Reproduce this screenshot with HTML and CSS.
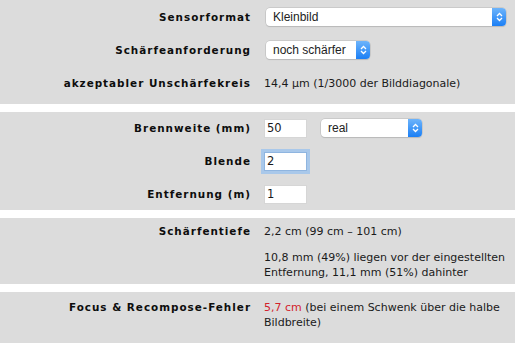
FILE: index.html
```html
<!DOCTYPE html>
<html lang="de">
  <head>
    <meta charset="UTF-8" />
    <meta name="viewport" content="width=device-width, initial-scale=1.0" />
    <title>Schärfentiefe-Rechner</title>
    <link rel="stylesheet" href="styles.css">
  </head>
  <body>
    <div class="calc">
      <div class="section first">
        <div class="row">
          <div class="label">Sensorformat</div>
          <div class="value">
            <div class="select wide">
              <span class="select-text">Kleinbild</span>
              <span class="arrows">
                <svg width="7" height="10" viewBox="0 0 7 10"><path d="M1 4 L3.5 1.5 L6 4 M1 6 L3.5 8.5 L6 6" fill="none" stroke="#fff" stroke-width="1.3"/></svg>
              </span>
            </div>
          </div>
        </div>
        <div class="row">
          <div class="label">Schärfeanforderung</div>
          <div class="value">
            <div class="select medium">
              <span class="select-text">noch schärfer</span>
              <span class="arrows">
                <svg width="7" height="10" viewBox="0 0 7 10"><path d="M1 4 L3.5 1.5 L6 4 M1 6 L3.5 8.5 L6 6" fill="none" stroke="#fff" stroke-width="1.3"/></svg>
              </span>
            </div>
          </div>
        </div>
        <div class="row">
          <div class="label">akzeptabler Unschärfekreis</div>
          <div class="value text">14,4 µm (1/3000 der Bilddiagonale)</div>
        </div>
      </div>

      <div class="section second">
        <div class="row">
          <div class="label">Brennweite (mm)</div>
          <div class="value inline">
            <div class="input">50</div>
            <div class="select small">
              <span class="select-text">real</span>
              <span class="arrows">
                <svg width="7" height="10" viewBox="0 0 7 10"><path d="M1 4 L3.5 1.5 L6 4 M1 6 L3.5 8.5 L6 6" fill="none" stroke="#fff" stroke-width="1.3"/></svg>
              </span>
            </div>
          </div>
        </div>
        <div class="row">
          <div class="label">Blende</div>
          <div class="value">
            <div class="input focused">2</div>
          </div>
        </div>
        <div class="row">
          <div class="label">Entfernung (m)</div>
          <div class="value">
            <div class="input">1</div>
          </div>
        </div>
      </div>

      <div class="section third">
        <div class="row top">
          <div class="label">Schärfentiefe</div>
          <div class="value text">2,2 cm (99 cm – 101 cm)</div>
        </div>
        <div class="row top">
          <div class="label"></div>
          <div class="value text">10,8 mm (49%) liegen vor der eingestellten Entfernung, 11,1 mm (51%) dahinter</div>
        </div>
      </div>

      <div class="section fourth">
        <div class="row top">
          <div class="label">Focus &amp; Recompose-Fehler</div>
          <div class="value text"><span class="error">5,7 cm</span> (bei einem Schwenk über die halbe Bildbreite)</div>
        </div>
      </div>
    </div>
  </body>
</html>
```

FILE: styles.css
```css
body {
  margin: 0;
  background-color: #fff;
  font-family: "DejaVu Sans", Verdana, sans-serif;
  color: #1a1a1a;
}
.calc {
  display: flex;
  flex-direction: column;
  gap: 8px;
}
.section {
  background-color: #dcdcdc;
  display: flex;
  flex-direction: column;
}
.first {
  height: 104px;
  padding-top: 7px;
  gap: 13px;
  box-sizing: border-box;
}
.second {
  height: 98px;
  padding-top: 5px;
  gap: 11px;
  box-sizing: border-box;
}
.third {
  height: 66px;
  padding-top: 6px;
  gap: 11px;
  box-sizing: border-box;
}
.fourth {
  height: 52px;
  padding-top: 8px;
  box-sizing: border-box;
}
.row {
  display: grid;
  grid-template-columns: 251px 1fr;
  column-gap: 13px;
  align-items: center;
  min-height: 20px;
}
.second .row {
  min-height: 22px;
}
.row.top {
  align-items: start;
  min-height: 0;
}
.label {
  text-align: right;
  font-weight: bold;
  font-size: 10.4px;
  letter-spacing: 1px;
  line-height: 15px;
  color: #0d0d0d;
}
.value.text {
  font-size: 11px;
  line-height: 15px;
  padding-right: 4px;
}
.value.inline {
  display: flex;
  align-items: center;
  gap: 14px;
}
.error {
  color: #d3222b;
}
.select {
  display: flex;
  align-items: stretch;
  height: 18px;
  margin-left: 2px;
  background-color: #fff;
  border-radius: 4px;
  box-shadow: 0 0 0 0.5px #b8b8b8, 0 1px 1px rgba(0, 0, 0, 0.15);
  font-family: "Liberation Sans", Arial, sans-serif;
  font-size: 12px;
  box-sizing: border-box;
}
.select.wide {
  width: 240px;
}
.select.medium {
  width: 104px;
}
.select.small {
  width: 101px;
  margin-left: 0;
}
.select-text {
  flex: 1;
  padding-left: 7px;
  line-height: 18px;
  color: #222;
}
.arrows {
  width: 14px;
  display: flex;
  align-items: center;
  justify-content: center;
  background: linear-gradient(#6db4fb, #1b7ff5);
  border-radius: 0 4px 4px 0;
}
.input {
  width: 43px;
  height: 19px;
  box-sizing: border-box;
  background-color: #fff;
  border: 1px solid #d6d6d6;
  padding-left: 2px;
  font-size: 11.5px;
  line-height: 17px;
}
.input.focused {
  box-shadow: 0 0 0 3px #a9c8ea;
  border-color: #8fb5e0;
}
```
